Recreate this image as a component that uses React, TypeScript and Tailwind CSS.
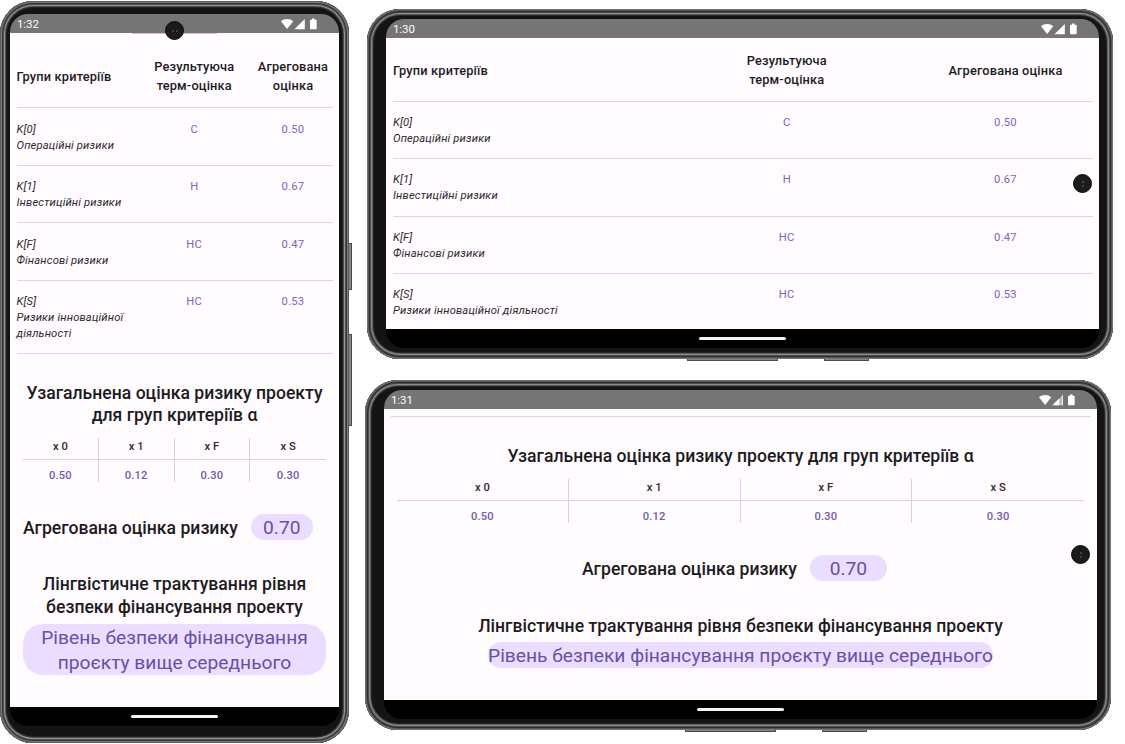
import type { ReactNode } from "react";

const criteria = [
  { code: "K[0]", name: "Операційні ризики", term: "С", score: "0.50" },
  { code: "K[1]", name: "Інвестиційні ризики", term: "Н", score: "0.67" },
  { code: "K[F]", name: "Фінансові ризики", term: "НС", score: "0.47" },
  { code: "K[S]", name: "Ризики інноваційної діяльності", term: "НС", score: "0.53" },
];

const groups = [
  { label: "x 0", value: "0.50" },
  { label: "x 1", value: "0.12" },
  { label: "x F", value: "0.30" },
  { label: "x S", value: "0.30" },
];

function StatusIcons({ weak = false }: { weak?: boolean }) {
  return (
    <svg width="36" height="12" viewBox="0 0 36 12" fill="#fff">
      <path d="M0 3.2C3.4.1 8.8.1 12.2 3.2L6.1 11Z" />
      {weak ? (
        <>
          <path d="M13.4 11.2 23.8 1v10.2Z" opacity=".45" />
          <path d="M13.4 11.2 20.4 4.3v6.9ZM22.8 2 23.8 1v10.2h-1Z" />
        </>
      ) : (
        <path d="M13.4 11.2 23.8 1v10.2Z" />
      )}
      <path d="M31 .6h2.6v1.2h1.1c.6 0 1 .4 1 1v7.4c0 .6-.4 1-1 1H30c-.6 0-1-.4-1-1V2.8c0-.6.4-1 1-1h1Z" />
    </svg>
  );
}

function Camera({ vertical = false }: { vertical?: boolean }) {
  return (
    <div
      className={`flex size-[19px] items-center justify-center gap-[2px] rounded-full border border-[#0b0b0b] bg-[#1b1b1b] ${vertical ? "flex-col" : ""}`}
    >
      <span className="size-[2px] rounded-full bg-[#5c5230]" />
      <span className="size-[2px] rounded-full bg-[#84382a]" />
    </div>
  );
}

function Screen({ time, weak, children }: { time: string; weak?: boolean; children: ReactNode }) {
  return (
    <div className="flex h-full w-full flex-col overflow-hidden rounded-[18px] bg-black">
      <div className="flex h-[19px] shrink-0 items-center justify-between bg-[#757575] pr-[22px] pl-[7px]">
        <span className="pt-[2px] text-[11.5px] leading-[19px] tracking-[-0.1px] text-white">{time}</span>
        <StatusIcons weak={weak} />
      </div>
      <div className="min-h-0 flex-1 overflow-hidden bg-[#fffbff]">{children}</div>
      <div className="flex h-[19px] shrink-0 items-center justify-center bg-black">
        <div className="h-[3px] w-[87px] rounded-full bg-[#f7f3f7]" />
      </div>
    </div>
  );
}

function CriteriaHeader({ className = "" }: { className?: string }) {
  return (
    <div
      className={`grid grid-cols-[1.5fr_1.5fr_1fr] items-center border-b border-[#d8d8da] text-[12.8px] leading-[19px] font-medium tracking-[0.16px] text-[#1c1b1e] ${className}`}
    >
      <div>Групи критеріїв</div>
      <div className="text-center">
        Результуюча
        <br />
        терм-оцінка
      </div>
      <div className="text-center">Агрегована оцінка</div>
    </div>
  );
}

function CriteriaRows() {
  return (
    <div>
      {criteria.map((c) => (
        <div
          key={c.code}
          className="grid grid-cols-[1.5fr_1.5fr_1fr] border-b border-[#d8d8da] pt-[13.4px] pb-[11.1px] text-[11.2px] leading-[16px] tracking-[0.25px]"
        >
          <div className="tracking-[0.17px] text-[#2b2a2d] italic">
            <div>{c.code}</div>
            <div>{c.name}</div>
          </div>
          <div className="text-center text-[#7a67b5]">{c.term}</div>
          <div className="text-center text-[#7a67b5]">{c.score}</div>
        </div>
      ))}
    </div>
  );
}

function GroupTable() {
  return (
    <div className="grid grid-cols-4 text-center text-[11.2px] font-medium">
      {groups.map((g) => (
        <div key={g.label} className="border-r border-[#d5d3d6] last:border-r-0">
          <div className="h-[22px] border-b border-[#d5d3d6] leading-[18px] text-[#2b2a2d]">{g.label}</div>
          <div className="h-[22px] pt-[7px] leading-[18px] tracking-[0.2px] text-[#6f5bae]">{g.value}</div>
        </div>
      ))}
    </div>
  );
}

function SideKey({ className }: { className: string }) {
  return <div className={`absolute border border-[#4a4a4a] bg-[#858585] ${className}`} />;
}

const frame =
  "relative bg-[#141414] shadow-[inset_0_0_0_1px_#5c5c5c,inset_0_0_0_2px_#7b7b7b,inset_0_0_0_3px_#353535,inset_0_0_0_4px_#505050,inset_0_0_0_5px_#969696,inset_0_0_0_6px_#4b4b4b,inset_0_0_0_7px_#242424]";

const frameWide =
  "relative bg-[#141414] shadow-[inset_0_0_0_1px_#747474,inset_0_0_0_2px_#555,inset_0_0_0_3px_#2e2e2e,inset_0_0_0_4px_#4d4d4d,inset_0_0_0_5px_#8c8c8c,inset_0_0_0_6px_#5c5c5c,inset_0_0_0_7px_#252525]";

export default function App() {
  return (
    <div className="flex h-[744px] w-[1125px] overflow-hidden bg-white font-['Roboto',sans-serif]">
      <div className="w-[364px] shrink-0 pt-px">
        <div className="relative w-[349px]">
          <SideKey className="top-[242px] -right-[3px] h-[47px] w-[5px]" />
          <SideKey className="top-[333px] -right-[3px] h-[92px] w-[5px]" />
          <div className={`h-[742px] w-[349px] rounded-[33px] px-[10px] pt-[13px] pb-[17px] ${frame}`}>
            <Screen time="1:32">
              <div className="mx-auto h-px w-[85px] bg-[#c9c5cc]" />
              <div className="px-[6.5px]">
                <CriteriaHeader className="h-[74.2px] pt-[11px]" />
                <CriteriaRows />
              </div>
              <div className="px-[13px] pt-[27.6px]">
                <h2 className="-mx-2 text-center text-[17.6px] leading-[22.5px] font-medium text-[#1c1b1e]">
                  Узагальнена оцінка ризику проекту
                  <br />
                  для груп критеріїв α
                </h2>
                <div className="pt-[11px]">
                  <GroupTable />
                </div>
                <div className="flex items-center pt-[31px]">
                  <span className="pt-[2px] text-[17.6px] leading-[26px] font-medium whitespace-nowrap text-[#1c1b1e]">
                    Агрегована оцінка ризику
                  </span>
                  <span className="ml-[13px] h-[26px] w-[62px] rounded-full bg-[#eaddff] text-center text-[19.2px] leading-[28px] text-[#6750a4]">
                    0.70
                  </span>
                </div>
                <h2 className="pt-[32.6px] text-center text-[17.6px] leading-[22.5px] font-medium text-[#1c1b1e]">
                  Лінгвістичне трактування рівня
                  <br />
                  безпеки фінансування проекту
                </h2>
                <div className="mt-[5.4px] h-[51px] rounded-[20px] bg-[#eaddff] pt-px text-center text-[19.2px] leading-[25.6px] whitespace-nowrap text-[#6750a4]">
                  Рівень безпеки фінансування
                  <br />
                  проєкту вище середнього
                </div>
              </div>
            </Screen>
            <div className="absolute top-[20px] left-[165px]">
              <Camera />
            </div>
          </div>
        </div>
      </div>

      <div className="flex w-[761px] shrink-0 flex-col">
        <div className="relative mt-[9px] ml-[3px] w-[746px]">
          <SideKey className="-bottom-[2px] left-[320px] h-[5px] w-[91px]" />
          <SideKey className="-bottom-[2px] left-[457px] h-[5px] w-[45px]" />
          <div className={`h-[350px] w-[746px] rounded-[33px] pt-[10px] pr-[14px] pb-[11px] pl-[19px] ${frameWide}`}>
            <Screen time="1:30">
              <div className="pr-[6px] pl-[7px]">
                <CriteriaHeader className="h-[63.6px] pt-[1.5px]" />
                <CriteriaRows />
              </div>
            </Screen>
            <div className="absolute top-[165px] left-[706px]">
              <Camera vertical />
            </div>
          </div>
        </div>

        <div className="relative mt-[21px] ml-[1px] w-[746px]">
          <SideKey className="-bottom-[2px] left-[320px] h-[5px] w-[91px]" />
          <SideKey className="-bottom-[2px] left-[457px] h-[5px] w-[45px]" />
          <div className={`h-[350px] w-[746px] rounded-[33px] pt-[10px] pr-[14px] pb-[11px] pl-[19px] ${frameWide}`}>
            <Screen time="1:31" weak>
              <div className="px-[6.5px] pt-[7px]">
                <div className="h-px bg-[#d8d8da]" />
              </div>
              <div className="px-[13px] pt-[28px]">
                <h2 className="text-center text-[17.6px] leading-[22.5px] font-medium text-[#1c1b1e]">
                  Узагальнена оцінка ризику проекту для груп критеріїв α
                </h2>
                <div className="pt-[11.5px]">
                  <GroupTable />
                </div>
                <div className="flex items-center justify-center pt-[31px] pr-[12px]">
                  <span className="pt-[2px] text-[17.6px] leading-[26px] font-medium whitespace-nowrap text-[#1c1b1e]">
                    Агрегована оцінка ризику
                  </span>
                  <span className="ml-[13px] h-[26px] w-[77px] rounded-full bg-[#eaddff] text-center text-[19.2px] leading-[28px] text-[#6750a4]">
                    0.70
                  </span>
                </div>
                <h2 className="pt-[32.6px] text-center text-[17.6px] leading-[22.5px] font-medium text-[#1c1b1e]">
                  Лінгвістичне трактування рівня безпеки фінансування проекту
                </h2>
                <div className="mt-[5px] flex justify-center">
                  <span className="h-[25.5px] rounded-full bg-[#eaddff] text-[19.2px] leading-[28px] whitespace-nowrap text-[#6750a4]">
                    Рівень безпеки фінансування проєкту вище середнього
                  </span>
                </div>
              </div>
            </Screen>
            <div className="absolute top-[165px] left-[706px]">
              <Camera vertical />
            </div>
          </div>
        </div>
      </div>
    </div>
  );
}
